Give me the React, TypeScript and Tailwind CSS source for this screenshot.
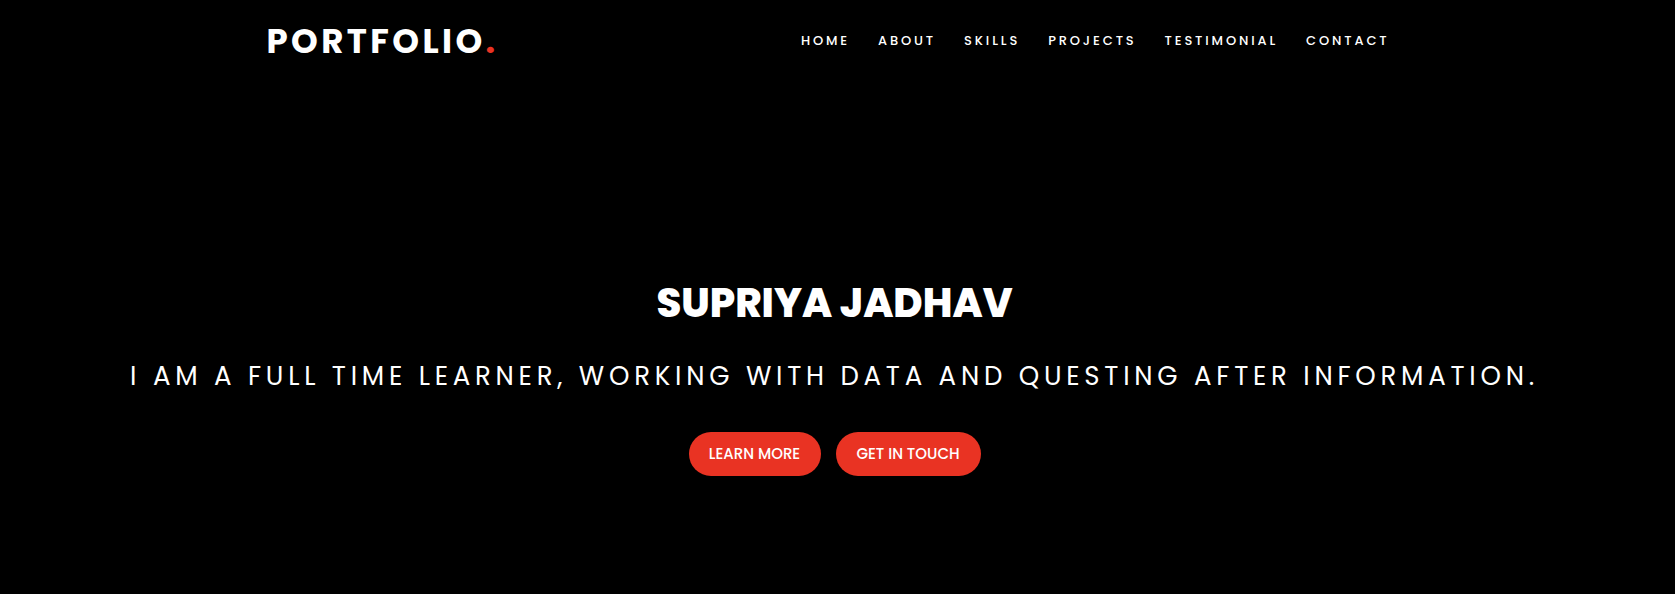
import React from "react";

const navLinks = ["Home", "About", "Skills", "Projects", "Testimonial", "Contact"];

export default function App() {
  return (
    <div
      className="min-h-[594px] w-full bg-black text-white"
      style={{ fontFamily: "Poppins, Inter, 'Noto Sans', sans-serif" }}
    >
      {/* Header */}
      <header className="mx-auto flex w-[1142px] items-center justify-between pt-[24px]">
        <a href="#" className="text-[34px] font-bold leading-[34px] tracking-[0.1em]">
          PORTFOLIO<span className="text-[#e93323]">.</span>
        </a>
        <nav className="mr-[19px] flex items-center gap-[28px]">
          {navLinks.map((link) => (
            <a
              key={link}
              href="#"
              className="text-[13px] font-medium uppercase tracking-[0.22em]"
            >
              {link}
            </a>
          ))}
        </nav>
      </header>

      {/* Hero */}
      <section className="flex flex-col items-center pr-[6px] pt-[220px] text-center">
        <h1 className="text-[40px] font-extrabold leading-[50px]">SUPRIYA JADHAV</h1>
        <p className="mt-[31px] text-[26px] uppercase leading-[34px] tracking-[4.75px]">
          I am a full time learner, working with data and questing after information.
        </p>
        <div className="mt-[39px] flex gap-[15px]">
          <a
            href="#"
            className="flex h-[44px] w-[132px] items-center justify-center rounded-full bg-[#e93323] text-[15px] font-medium"
          >
            LEARN MORE
          </a>
          <a
            href="#"
            className="flex h-[44px] w-[145px] items-center justify-center rounded-full bg-[#e93323] text-[15px] font-medium"
          >
            GET IN TOUCH
          </a>
        </div>
      </section>
    </div>
  );
}
